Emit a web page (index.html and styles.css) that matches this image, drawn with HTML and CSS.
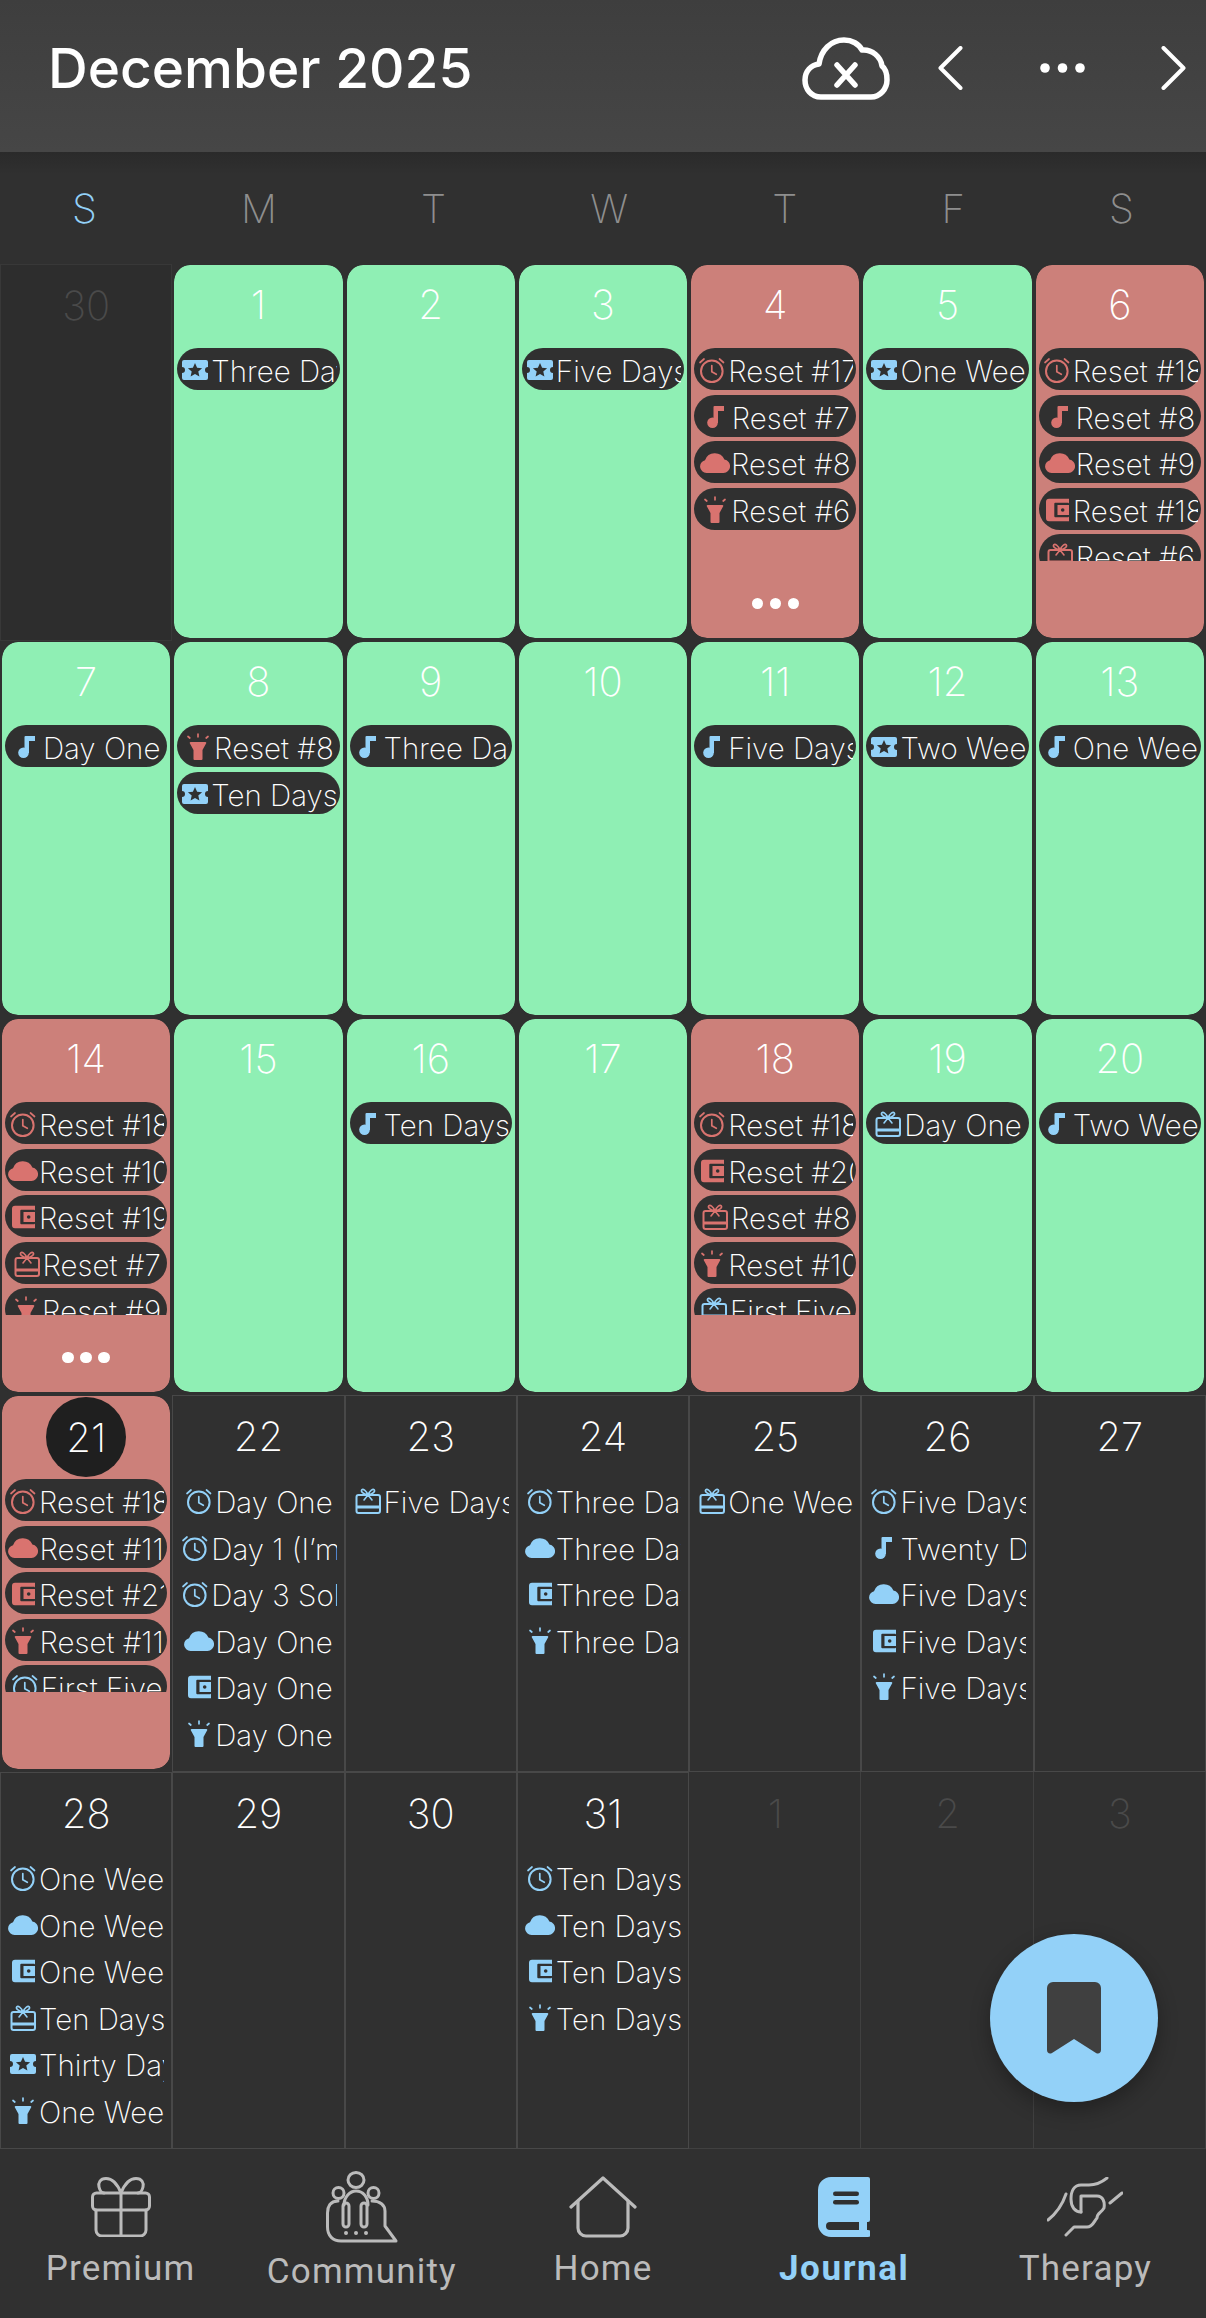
FILE: index.html
```html
<!DOCTYPE html>
<html lang="en">
<head>
<meta charset="utf-8">
<title>Journal</title>
<link rel="stylesheet" href="styles.css">
</head>
<body>
<svg class="defs" aria-hidden="true">
  <symbol id="alarm" viewBox="0 0 30 30"><circle cx="14.800" cy="16.300" r="10.800" fill="none" stroke="currentColor" stroke-width="2"/><path d="M14.800 10.500v6.300l4.500 2.500M3 7.500l4-3.500M26.500 7.500l-4-3.500" fill="none" stroke="currentColor" stroke-width="1.700" stroke-linecap="round"/></symbol>
  <symbol id="music" viewBox="0 0 30 30"><circle cx="11.500" cy="20.800" r="5.300" fill="currentColor"/><path d="M12.500 5a1 1 0 0 1 1-1H23v5h-6v12h-4.500z" fill="currentColor"/></symbol>
  <symbol id="cloud" viewBox="0 0 30 30"><path d="M6.500 25A6.500 6.500 0 0 1 5 12.200 10.500 10.500 0 0 1 24.400 11.500 6.800 6.800 0 0 1 23.500 25Z" fill="currentColor"/></symbol>
  <symbol id="wallet" viewBox="0 0 30 30"><path d="M7 3.700h20v22.600H7a3 3 0 0 1-3-3V6.700a3 3 0 0 1 3-3z" fill="currentColor"/><rect x="12.300" y="7.800" width="14.700" height="14.500" rx="1" fill="#303030"/><rect x="15.500" y="10" width="11.500" height="10" fill="currentColor"/><circle cx="20.700" cy="15" r="1.800" fill="#303030"/></symbol>
  <symbol id="flash" viewBox="0 0 30 30"><path d="M7.500 10h15a.8.800 0 0 1 .7 1.200L19.500 18v9a1 1 0 0 1-1 1h-7a1 1 0 0 1-1-1v-9l-3.700-6.800a.8.800 0 0 1 .7-1.200z" fill="currentColor"/><path d="M15 2v2.800M5 4.500l1.800 1.500M25 4.500l-1.800 1.500" fill="none" stroke="currentColor" stroke-width="1.700" stroke-linecap="round"/></symbol>
  <symbol id="ticket" viewBox="0 0 30 30"><path d="M4 5h22a2 2 0 0 1 2 2v5a3 3 0 0 0 0 6v5a2 2 0 0 1-2 2H4a2 2 0 0 1-2-2v-5a3 3 0 0 0 0-6V7a2 2 0 0 1 2-2z" fill="currentColor"/><path d="M15 8l2.100 4.700 5 .5-3.800 3.300 1.100 5L15 19l-4.400 2.500 1.100-5-3.800-3.300 5-.5z" fill="#303030"/></symbol>
  <symbol id="gift" viewBox="0 0 30 30"><rect x="3.500" y="9" width="23.500" height="18" rx="2" fill="none" stroke="currentColor" stroke-width="2"/><rect x="3.500" y="19.500" width="23.500" height="3" fill="currentColor"/><path d="M15 9C13 4 10 2.500 8.800 3.800 7.500 5.500 10 8 15 9ZM15 9c2-5 5-6.500 6.200-5.200C22.500 5.500 20 8 15 9ZM15 9l-4 5M15 9l4 5" fill="none" stroke="currentColor" stroke-width="1.600" stroke-linecap="round"/></symbol>
</svg>

<header class="topbar">
  <h1 class="title">December 2025</h1>
  <div class="actions">
    <svg class="cloud-x" viewBox="0 0 88 63"><path d="M19 60C9 60 3 52 3 43 3 34 9 28 17 27 19 13 29 3 42 3 50 3 57 7 60 13 70 12 79 20 80 29 84 32 85 38 85 43 85 52 78 60 69 60Z" fill="none" stroke="#fff" stroke-width="5.500" stroke-linejoin="round"/><path d="M35 28l18 20M53 28L35 48" fill="none" stroke="#fff" stroke-width="5.500" stroke-linecap="round"/></svg>
    <svg class="chev" viewBox="0 0 25 44"><path d="M22.500 2L2.500 22l20 20" fill="none" stroke="#fff" stroke-width="4" stroke-linecap="round" stroke-linejoin="round"/></svg>
    <svg class="more-h" viewBox="0 0 45 10"><circle cx="5" cy="5" r="4.800" fill="#fff"/><circle cx="22.500" cy="5" r="4.800" fill="#fff"/><circle cx="40" cy="5" r="4.800" fill="#fff"/></svg>
    <svg class="chev" viewBox="0 0 25 44"><path d="M2.500 2l20 20-20 20" fill="none" stroke="#fff" stroke-width="4" stroke-linecap="round" stroke-linejoin="round"/></svg>
  </div>
</header>

<div class="weekdays">
  <span class="wd wd-first">S</span><span class="wd">M</span><span class="wd">T</span><span class="wd">W</span><span class="wd">T</span><span class="wd">F</span><span class="wd">S</span>
</div>

<main class="month">
  <!-- row 1 -->
  <div class="cell nov"><span class="num">30</span></div>
  <div class="cell card green"><span class="num">1</span><div class="items">
    <div class="chip"><svg class="ic blue"><use href="#ticket"/></svg><span class="txt">Three Days</span></div></div></div>
  <div class="cell card green"><span class="num">2</span></div>
  <div class="cell card green"><span class="num">3</span><div class="items">
    <div class="chip"><svg class="ic blue"><use href="#ticket"/></svg><span class="txt">Five Days</span></div></div></div>
  <div class="cell card red"><span class="num">4</span><div class="items clip">
    <div class="chip"><svg class="ic rose"><use href="#alarm"/></svg><span class="txt">Reset #17</span></div>
    <div class="chip"><svg class="ic rose"><use href="#music"/></svg><span class="txt">Reset #7</span></div>
    <div class="chip"><svg class="ic rose"><use href="#cloud"/></svg><span class="txt">Reset #8</span></div>
    <div class="chip"><svg class="ic rose"><use href="#flash"/></svg><span class="txt">Reset #6</span></div></div>
    <div class="dots"><i></i><i></i><i></i></div></div>
  <div class="cell card green"><span class="num">5</span><div class="items">
    <div class="chip"><svg class="ic blue"><use href="#ticket"/></svg><span class="txt">One Week</span></div></div></div>
  <div class="cell card red"><span class="num">6</span><div class="items clip">
    <div class="chip"><svg class="ic rose"><use href="#alarm"/></svg><span class="txt">Reset #18</span></div>
    <div class="chip"><svg class="ic rose"><use href="#music"/></svg><span class="txt">Reset #8</span></div>
    <div class="chip"><svg class="ic rose"><use href="#cloud"/></svg><span class="txt">Reset #9</span></div>
    <div class="chip"><svg class="ic rose"><use href="#wallet"/></svg><span class="txt">Reset #18</span></div>
    <div class="chip"><svg class="ic rose"><use href="#gift"/></svg><span class="txt">Reset #6</span></div></div></div>

  <!-- row 2 -->
  <div class="cell card green"><span class="num">7</span><div class="items">
    <div class="chip"><svg class="ic blue"><use href="#music"/></svg><span class="txt">Day One</span></div></div></div>
  <div class="cell card green"><span class="num">8</span><div class="items">
    <div class="chip"><svg class="ic rose"><use href="#flash"/></svg><span class="txt">Reset #8</span></div>
    <div class="chip"><svg class="ic blue"><use href="#ticket"/></svg><span class="txt">Ten Days</span></div></div></div>
  <div class="cell card green"><span class="num">9</span><div class="items">
    <div class="chip"><svg class="ic blue"><use href="#music"/></svg><span class="txt">Three Days</span></div></div></div>
  <div class="cell card green"><span class="num">10</span></div>
  <div class="cell card green"><span class="num">11</span><div class="items">
    <div class="chip"><svg class="ic blue"><use href="#music"/></svg><span class="txt">Five Days</span></div></div></div>
  <div class="cell card green"><span class="num">12</span><div class="items">
    <div class="chip"><svg class="ic blue"><use href="#ticket"/></svg><span class="txt">Two Weeks</span></div></div></div>
  <div class="cell card green"><span class="num">13</span><div class="items">
    <div class="chip"><svg class="ic blue"><use href="#music"/></svg><span class="txt">One Week</span></div></div></div>

  <!-- row 3 -->
  <div class="cell card red"><span class="num">14</span><div class="items clip">
    <div class="chip"><svg class="ic rose"><use href="#alarm"/></svg><span class="txt">Reset #18</span></div>
    <div class="chip"><svg class="ic rose"><use href="#cloud"/></svg><span class="txt">Reset #10</span></div>
    <div class="chip"><svg class="ic rose"><use href="#wallet"/></svg><span class="txt">Reset #19</span></div>
    <div class="chip"><svg class="ic rose"><use href="#gift"/></svg><span class="txt">Reset #7</span></div>
    <div class="chip"><svg class="ic rose"><use href="#flash"/></svg><span class="txt">Reset #9</span></div></div>
    <div class="dots"><i></i><i></i><i></i></div></div>
  <div class="cell card green"><span class="num">15</span></div>
  <div class="cell card green"><span class="num">16</span><div class="items">
    <div class="chip"><svg class="ic blue"><use href="#music"/></svg><span class="txt">Ten Days</span></div></div></div>
  <div class="cell card green"><span class="num">17</span></div>
  <div class="cell card red"><span class="num">18</span><div class="items clip">
    <div class="chip"><svg class="ic rose"><use href="#alarm"/></svg><span class="txt">Reset #18</span></div>
    <div class="chip"><svg class="ic rose"><use href="#wallet"/></svg><span class="txt">Reset #20</span></div>
    <div class="chip"><svg class="ic rose"><use href="#gift"/></svg><span class="txt">Reset #8</span></div>
    <div class="chip"><svg class="ic rose"><use href="#flash"/></svg><span class="txt">Reset #10</span></div>
    <div class="chip"><svg class="ic blue"><use href="#gift"/></svg><span class="txt">First Five</span></div></div></div>
  <div class="cell card green"><span class="num">19</span><div class="items">
    <div class="chip"><svg class="ic blue"><use href="#gift"/></svg><span class="txt">Day One</span></div></div></div>
  <div class="cell card green"><span class="num">20</span><div class="items">
    <div class="chip"><svg class="ic blue"><use href="#music"/></svg><span class="txt">Two Weeks</span></div></div></div>

  <!-- row 4 -->
  <div class="cell card red"><span class="num today">21</span><div class="items clip">
    <div class="chip"><svg class="ic rose"><use href="#alarm"/></svg><span class="txt">Reset #18</span></div>
    <div class="chip"><svg class="ic rose"><use href="#cloud"/></svg><span class="txt">Reset #11</span></div>
    <div class="chip"><svg class="ic rose"><use href="#wallet"/></svg><span class="txt">Reset #21</span></div>
    <div class="chip"><svg class="ic rose"><use href="#flash"/></svg><span class="txt">Reset #11</span></div>
    <div class="chip"><svg class="ic blue"><use href="#alarm"/></svg><span class="txt">First Five</span></div></div></div>
  <div class="cell"><span class="num">22</span><div class="items">
    <div class="chip"><svg class="ic blue"><use href="#alarm"/></svg><span class="txt">Day One</span></div>
    <div class="chip"><svg class="ic blue"><use href="#alarm"/></svg><span class="txt">Day 1 (I’m back)</span></div>
    <div class="chip"><svg class="ic blue"><use href="#alarm"/></svg><span class="txt">Day 3 Sober</span></div>
    <div class="chip"><svg class="ic blue"><use href="#cloud"/></svg><span class="txt">Day One</span></div>
    <div class="chip"><svg class="ic blue"><use href="#wallet"/></svg><span class="txt">Day One</span></div>
    <div class="chip"><svg class="ic blue"><use href="#flash"/></svg><span class="txt">Day One</span></div></div></div>
  <div class="cell"><span class="num">23</span><div class="items">
    <div class="chip"><svg class="ic blue"><use href="#gift"/></svg><span class="txt">Five Days</span></div></div></div>
  <div class="cell"><span class="num">24</span><div class="items">
    <div class="chip"><svg class="ic blue"><use href="#alarm"/></svg><span class="txt">Three Days</span></div>
    <div class="chip"><svg class="ic blue"><use href="#cloud"/></svg><span class="txt">Three Days</span></div>
    <div class="chip"><svg class="ic blue"><use href="#wallet"/></svg><span class="txt">Three Days</span></div>
    <div class="chip"><svg class="ic blue"><use href="#flash"/></svg><span class="txt">Three Days</span></div></div></div>
  <div class="cell"><span class="num">25</span><div class="items">
    <div class="chip"><svg class="ic blue"><use href="#gift"/></svg><span class="txt">One Week</span></div></div></div>
  <div class="cell"><span class="num">26</span><div class="items">
    <div class="chip"><svg class="ic blue"><use href="#alarm"/></svg><span class="txt">Five Days</span></div>
    <div class="chip"><svg class="ic blue"><use href="#music"/></svg><span class="txt">Twenty Days</span></div>
    <div class="chip"><svg class="ic blue"><use href="#cloud"/></svg><span class="txt">Five Days</span></div>
    <div class="chip"><svg class="ic blue"><use href="#wallet"/></svg><span class="txt">Five Days</span></div>
    <div class="chip"><svg class="ic blue"><use href="#flash"/></svg><span class="txt">Five Days</span></div></div></div>
  <div class="cell"><span class="num">27</span></div>

  <!-- row 5 -->
  <div class="cell"><span class="num">28</span><div class="items">
    <div class="chip"><svg class="ic blue"><use href="#alarm"/></svg><span class="txt">One Week</span></div>
    <div class="chip"><svg class="ic blue"><use href="#cloud"/></svg><span class="txt">One Week</span></div>
    <div class="chip"><svg class="ic blue"><use href="#wallet"/></svg><span class="txt">One Week</span></div>
    <div class="chip"><svg class="ic blue"><use href="#gift"/></svg><span class="txt">Ten Days</span></div>
    <div class="chip"><svg class="ic blue"><use href="#ticket"/></svg><span class="txt">Thirty Days</span></div>
    <div class="chip"><svg class="ic blue"><use href="#flash"/></svg><span class="txt">One Week</span></div></div></div>
  <div class="cell"><span class="num">29</span></div>
  <div class="cell"><span class="num">30</span></div>
  <div class="cell"><span class="num">31</span><div class="items">
    <div class="chip"><svg class="ic blue"><use href="#alarm"/></svg><span class="txt">Ten Days</span></div>
    <div class="chip"><svg class="ic blue"><use href="#cloud"/></svg><span class="txt">Ten Days</span></div>
    <div class="chip"><svg class="ic blue"><use href="#wallet"/></svg><span class="txt">Ten Days</span></div>
    <div class="chip"><svg class="ic blue"><use href="#flash"/></svg><span class="txt">Ten Days</span></div></div></div>
  <div class="cell jan"><span class="num">1</span></div>
  <div class="cell jan"><span class="num">2</span></div>
  <div class="cell jan"><span class="num">3</span></div>
</main>

<button class="fab" type="button" aria-label="Bookmarks">
  <svg class="fab-icon" viewBox="0 0 54 72"><path d="M6 0h42a6 6 0 0 1 6 6v62c0 3-2.500 4.500-5 3L27 57 5 71c-2.500 1.500-5 0-5-3V6a6 6 0 0 1 6-6z" fill="#404040"/></svg>
</button>

<nav class="tabs">
  <a class="tab">
    <span class="tab-icon"><svg width="60" height="60" viewBox="0 0 60 60" fill="none" stroke="currentColor" stroke-width="3" stroke-linejoin="round" stroke-linecap="round"><path d="M30 16C26 6 20 1.500 15 1.500 9 1.500 7 6 8 10 9 14 10 16 13 16M30 16C34 6 40 1.500 45 1.500 51 1.500 53 6 52 10 51 14 50 16 47 16"/><rect x="1.500" y="16" width="57" height="17" rx="4"/><path d="M5 33v20a6 6 0 0 0 6 6h38a6 6 0 0 0 6-6V33M30 16v43"/></svg></span>
    <span class="tab-label">Premium</span>
  </a>
  <a class="tab">
    <span class="tab-icon"><svg width="72" height="72" viewBox="0 0 72 72" fill="none" stroke="currentColor" stroke-width="3" stroke-linejoin="round" stroke-linecap="round"><ellipse cx="30" cy="9" rx="8" ry="7.500"/><circle cx="12.500" cy="22" r="5.500"/><circle cx="47.500" cy="22" r="5.500"/><path d="M12 30C4 30 1.500 36 1.500 42v14C1.500 65 7 70 15 70h55L59 55V40C59 34 54 30 46 30"/><path d="M18 34C18 26 24 20 30 20c7 0 12 6 12 14"/><rect x="17" y="32" width="6" height="24" rx="3"/><rect x="35" y="32" width="6" height="24" rx="3"/><path d="M20 62h.01M30 62h.01M40 62h.01" stroke-width="4"/></svg></span>
    <span class="tab-label tab-label-low">Community</span>
  </a>
  <a class="tab">
    <span class="tab-icon"><svg width="68" height="62" viewBox="0 0 68 62" fill="none" stroke="currentColor" stroke-width="3.200" stroke-linejoin="round" stroke-linecap="round"><path d="M2 31L34 2l32 29"/><path d="M9 25v27a8 8 0 0 0 8 8h34a8 8 0 0 0 8-8V25"/></svg></span>
    <span class="tab-label">Home</span>
  </a>
  <a class="tab tab-on">
    <span class="tab-icon"><svg width="52" height="60" viewBox="0 0 52 60"><path d="M13 0h37a2 2 0 0 1 2 2v41a2 2 0 0 1-2 2h-1v8h1a3.500 3.500 0 0 1 0 7H13A13 13 0 0 1 0 47V13A13 13 0 0 1 13 0z" fill="currentColor"/><rect x="15" y="14.500" width="26" height="4.500" rx="2.200" fill="#303030"/><rect x="15" y="23" width="26" height="4.500" rx="2.200" fill="#303030"/><path d="M12 45h29v8H12a4 4 0 0 1 0-8z" fill="#303030"/></svg></span>
    <span class="tab-label">Journal</span>
  </a>
  <a class="tab">
    <span class="tab-icon"><svg width="76" height="60" viewBox="0 0 76 60" fill="none" stroke="currentColor" stroke-width="3" stroke-linejoin="round" stroke-linecap="round"><path d="M60 1C55 5 50 8 42 8h-8C27 8 24 14 24 22c0 8 4 13 10 13"/><path d="M34 35V19h16c6 0 8 6 7 12-3 5-7 5-7 10-3 3-4 9-10 9H27l-8 8"/><path d="M19 17c-3 9-8 18-18 26M75 16L63 26"/></svg></span>
    <span class="tab-label">Therapy</span>
  </a>
</nav>
</body>
</html>
```
FILE: styles.css
```css
* { box-sizing: border-box; }

html, body {
  margin: 0;
  padding: 0;
}

body {
  position: relative;
  width: 1206px;
  height: 2318px;
  overflow: hidden;
  background: #303030;
  color: #fff;
  font-family: Inter, "Liberation Sans", sans-serif;
}

.defs {
  position: absolute;
  width: 0;
  height: 0;
}

/* Top bar */
.topbar {
  display: flex;
  align-items: center;
  justify-content: space-between;
  height: 152px;
  padding: 0 20px 16px 48px;
  background: linear-gradient(#3e3e3e, #464646);
}

.title {
  margin: 0;
  font-size: 55px;
  font-weight: 500;
  color: #fff;
}

.actions {
  display: flex;
  align-items: center;
}

.cloud-x { width: 88px; height: 63px; margin-right: 48px; }
.chev { width: 25px; height: 44px; }
.more-h { width: 45px; height: 10px; margin: 0 76px 0 77px; }

/* Weekday header */
.weekdays {
  display: flex;
  justify-content: space-around;
  align-items: center;
  height: 112px;
  background: linear-gradient(#2a2a2a, #303030 22px);
}

.wd {
  font-size: 40px;
  font-weight: 200;
  color: #8e8e8e;
}

.wd-first { color: #93d1f8; }

/* Month grid */
.month {
  display: grid;
  grid-template-columns: repeat(7, 1fr);
  grid-auto-rows: 377px;
}

.cell {
  display: flex;
  flex-direction: column;
  min-width: 0;
  padding: 1px;
  border: 1px solid #484848;
}

.card {
  padding: 0;
  border-style: solid;
  border-color: #303030;
  border-width: 1px 2px 3px;
  border-radius: 18px;
  background-clip: padding-box;
}

.green { background-color: #8fefb4; }
.red { background-color: #cc807a; }

.nov {
  background: #2d2d2d;
  border-color: #383838;
}

.jan {
  border-width: 0 1px 1px 0;
  padding: 2px 1px 1px 2px;
  border-color: #404040;
}

.num {
  align-self: center;
  display: flex;
  align-items: center;
  justify-content: center;
  width: 80px;
  height: 78px;
  margin-bottom: 4px;
  font-size: 40px;
  font-weight: 250;
  color: #fff;
}

.card .num { margin-bottom: 5px; }

.nov .num, .jan .num { color: #4a4a4a; }

.card .today {
  height: 80px;
  margin: 1px 0 2px;
  border-radius: 50%;
  background: #1f1f1f;
}

.items {
  display: flex;
  flex-direction: column;
  gap: 4.5px;
  margin: 0 3px;
}

.clip {
  max-height: 213px;
  overflow: hidden;
  flex: none;
}

.chip {
  display: flex;
  flex: none;
  align-items: center;
  justify-content: center;
  height: 42px;
  padding: 0 3px;
  border-radius: 21px;
}

.card .chip { background: #303030; }

.ic {
  flex: none;
  width: 30px;
  height: 30px;
  margin-top: 2px;
}

.blue { color: #93d1f8; }
.rose { color: #d9736f; }

.txt {
  min-width: 0;
  height: 42px;
  margin-left: 1px;
  overflow: hidden;
  white-space: nowrap;
  font-size: 29.500px;
  font-weight: 250;
  line-height: 47px;
  color: #fff;
}

.dots {
  display: flex;
  justify-content: center;
  gap: 6.5px;
  margin-top: auto;
  padding-bottom: 29px;
}

.dots i {
  width: 11.5px;
  height: 11.5px;
  border-radius: 50%;
  background: #fff;
}

/* Floating button */
.fab {
  position: absolute;
  left: 990px;
  top: 1934px;
  display: flex;
  align-items: center;
  justify-content: center;
  width: 168px;
  height: 168px;
  padding: 0;
  border: 0;
  border-radius: 50%;
  background: #93d1f8;
  box-shadow: 0 8px 20px rgba(0, 0, 0, 0.3);
}

.fab-icon { width: 54px; height: 72px; }

/* Bottom tabs */
.tabs {
  display: grid;
  grid-template-columns: repeat(5, 1fr);
  height: 169px;
  padding-top: 22px;
}

.tab {
  display: flex;
  flex-direction: column;
  align-items: center;
  color: #bbb;
}

.tab-icon {
  display: flex;
  align-items: center;
  justify-content: center;
  height: 72px;
}

.tab-label {
  margin-top: 4px;
  font-family: Roboto, "Liberation Sans", sans-serif;
  font-size: 35px;
  font-weight: 400;
  letter-spacing: 1.200px;
  line-height: 44px;
}

.tab-label-low { margin-top: 7px; }

.tab-on { color: #93d1f8; }
.tab-on .tab-label { font-weight: 700; letter-spacing: 1.600px; }
```
